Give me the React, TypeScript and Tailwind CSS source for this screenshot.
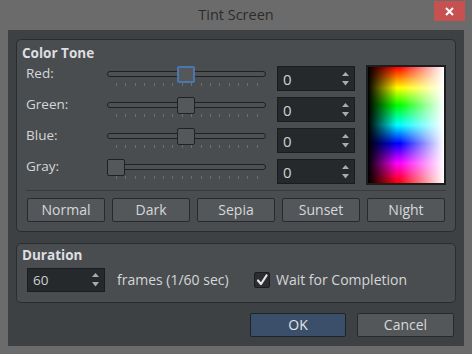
import React from "react";

function Spin({ value, big, h }: { value: string; big?: boolean; h: string }) {
  return (
    <div className={`relative w-[78px] ${h} border border-[#1b1c1d] bg-[#26292b] flex items-center`}>
      <span className={`pl-[5px] text-[#cfd1d3] ${big ? "text-[15px]" : "text-[13.5px]"} leading-[16px]`}>{value}</span>
      <svg className="absolute right-[5px] top-1/2 -translate-y-1/2" width="7" height="15" viewBox="0 0 7 15">
        <polygon points="3.5,0.5 7,4.5 0,4.5" fill="#a9acaf" />
        <polygon points="0,9.5 7,9.5 3.5,14" fill="#a9acaf" />
      </svg>
    </div>
  );
}

function Slider({ pos, focused }: { pos: "mid" | "start"; focused?: boolean }) {
  return (
    <div className="relative w-[159px] h-[25px]">
      <div className="absolute left-0 top-[5px] w-[159px] h-[6px] rounded-full border border-[#1e2022] bg-[#4e5154]" />
      <div className="absolute left-[9px] top-[17px] w-[142px] h-[3px] flex justify-between">
        {Array.from({ length: 16 }).map((_, i) => (
          <div key={i} className="w-px h-[3px] bg-[#6c6f72]" />
        ))}
      </div>
      <div
        className={`absolute top-0 w-[18px] h-[17px] rounded-[2px] bg-[#55585b] ${
          pos === "mid" ? "left-[70px]" : "left-0"
        } ${focused ? "border-2 border-[#4a78ae]" : "border border-[#1f2123]"}`}
      />
    </div>
  );
}

function Btn({ children, w, blue }: { children: React.ReactNode; w: string; blue?: boolean }) {
  return (
    <div
      className={`${w} h-[24px] rounded-[2px] border flex items-center justify-center text-[14px] leading-[16px] ${
        blue ? "bg-[#3c4f6a] border-[#1e232b] text-[#e2e4e6]" : "bg-[#54575a] border-[#27292b] text-[#d6d8da]"
      }`}
    >
      {children}
    </div>
  );
}

export default function App() {
  const rows = [
    { label: "Red:", pos: "mid" as const, focused: true },
    { label: "Green:", pos: "mid" as const },
    { label: "Blue:", pos: "mid" as const },
    { label: "Gray:", pos: "start" as const },
  ];
  return (
    <div className="w-[472px] h-[354px] bg-[#6b6b6b] flex flex-col font-['Open_Sans',sans-serif]">
      <div className="relative h-[30px] flex items-center justify-center">
        <span className="text-[14.5px] leading-[30px] text-[#2c2c2c]">Tint Screen</span>
        <div className="absolute right-[7px] top-[1px] w-[31px] h-[20px] bg-[#c75050] flex items-center justify-center">
          <svg width="9" height="9" viewBox="0 0 9 9">
            <path d="M1 1 L8 8 M8 1 L1 8" stroke="#ffffff" strokeWidth="2" />
          </svg>
        </div>
      </div>
      <div className="mx-[8px] h-[316px] bg-[#3e4144] px-[8px] pt-[9px] flex flex-col">
        <div className="h-[193px] border border-[#2a2c2e] rounded-[5px] bg-[#4a4d50] flex flex-col">
          <div className="pt-[5px] pl-[5px] text-[13.5px] font-bold leading-[16px] text-[#dedfe0]">Color Tone</div>
          <div className="mt-[5px] pl-[9px] flex items-start">
            <div className="flex flex-col">
              {rows.map((r) => (
                <div key={r.label} className="h-[31px] flex items-start">
                  <div className="w-[81px] -mt-[1px] text-[13.5px] leading-[16px] text-[#d4d6d8]">{r.label}</div>
                  <Slider pos={r.pos} focused={r.focused} />
                  <div className="ml-[11px]">
                    <Spin value="0" big h="h-[25px]" />
                  </div>
                </div>
              ))}
            </div>
            <div className="ml-[11px] -mt-[1px] w-[80px] h-[120px] border-2 border-[#1c1d1e]">
              <svg width="76" height="116" viewBox="0 0 76 116" preserveAspectRatio="none" className="block">
                <defs>
                  <linearGradient id="hue" x1="0" y1="0" x2="0" y2="1">
                    <stop offset="0" stopColor="#ff0000" />
                    <stop offset="0.18" stopColor="#ffff00" />
                    <stop offset="0.33" stopColor="#00ff00" />
                    <stop offset="0.5" stopColor="#00ffff" />
                    <stop offset="0.66" stopColor="#0000ff" />
                    <stop offset="0.83" stopColor="#ff00ff" />
                    <stop offset="1" stopColor="#ff0000" />
                  </linearGradient>
                  <linearGradient id="sat" x1="0" y1="0" x2="1" y2="0">
                    <stop offset="0" stopColor="#000000" stopOpacity="1" />
                    <stop offset="0.38" stopColor="#000000" stopOpacity="0" />
                    <stop offset="0.42" stopColor="#ffffff" stopOpacity="0" />
                    <stop offset="1" stopColor="#ffffff" stopOpacity="1" />
                  </linearGradient>
                </defs>
                <rect width="76" height="116" fill="url(#hue)" />
                <rect width="76" height="116" fill="url(#sat)" />
              </svg>
            </div>
          </div>
          <div className="ml-[9px] w-[420px] h-px bg-[#383a3d]" />
          <div className="mt-[7px] ml-[10px] flex gap-[7px]">
            {["Normal", "Dark", "Sepia", "Sunset", "Night"].map((b) => (
              <Btn key={b} w="w-[78px]">{b}</Btn>
            ))}
          </div>
        </div>
        <div className="mt-[11px] h-[60px] border border-[#2a2c2e] rounded-[5px] bg-[#4a4d50] flex flex-col">
          <div className="pt-[3px] pl-[5px] text-[13.5px] font-bold leading-[16px] text-[#dedfe0]">Duration</div>
          <div className="mt-[5px] pl-[10px] flex items-center">
            <Spin value="60" h="h-[24px]" />
            <div className="ml-[12px] w-[137px] text-[14px] leading-[16px] text-[#d4d6d8]">frames (1/60 sec)</div>
            <div className="w-[16px] h-[16px] rounded-[2px] border border-[#1b1c1d] bg-[#2b2d30] flex items-center justify-center">
              <svg width="12" height="12" viewBox="0 0 12 12">
                <path d="M2 6.5 L5 10 L10.5 1.5" stroke="#e8e8e8" strokeWidth="2.2" fill="none" strokeLinecap="round" strokeLinejoin="round" />
              </svg>
            </div>
            <div className="ml-[6px] text-[14px] leading-[16px] text-[#d4d6d8]">Wait for Completion</div>
          </div>
        </div>
        <div className="mt-[10px] pr-[2px] flex justify-end gap-[11px]">
          <Btn w="w-[96px]" blue>OK</Btn>
          <Btn w="w-[97px]">Cancel</Btn>
        </div>
      </div>
    </div>
  );
}
